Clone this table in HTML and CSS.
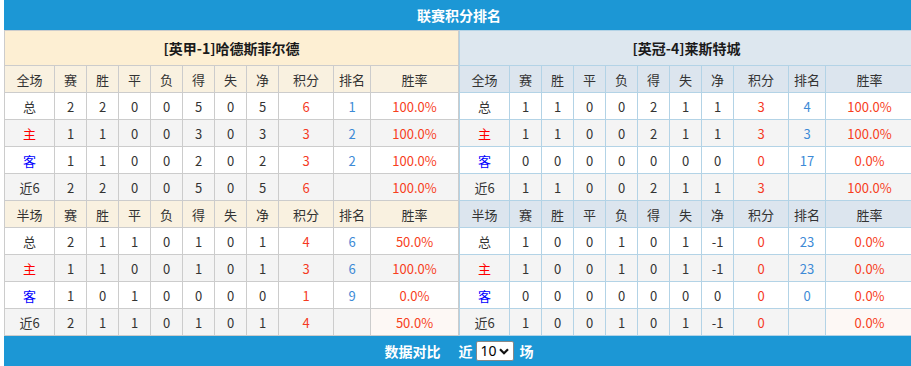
FILE: index.html
```html
<!DOCTYPE html>
<html lang="zh">
<head>
<meta charset="utf-8">
<title>联赛积分排名</title>
<link rel="stylesheet" href="styles.css">
</head>
<body>
<div class="wrap">
  <div class="bar title">联赛积分排名</div>
  <div class="tables">
    <table class="tb home">
      <colgroup><col class="c1"><col class="cn"><col class="cn"><col class="cn"><col class="cn"><col class="cn"><col class="cn"><col class="cn"><col class="cp"><col class="cr"><col class="cw"></colgroup>
      <tr class="team"><td colspan="11">[英甲-1]哈德斯菲尔德</td></tr>
      <tr class="head"><td>全场</td><td>赛</td><td>胜</td><td>平</td><td>负</td><td>得</td><td>失</td><td>净</td><td>积分</td><td>排名</td><td>胜率</td></tr>
      <tr class="w"><td>总</td><td>2</td><td>2</td><td>0</td><td>0</td><td>5</td><td>0</td><td>5</td><td class="pt">6</td><td class="rk">1</td><td class="rt">100.0%</td></tr>
      <tr class="g"><td class="zhu">主</td><td>1</td><td>1</td><td>0</td><td>0</td><td>3</td><td>0</td><td>3</td><td class="pt">3</td><td class="rk">2</td><td class="rt">100.0%</td></tr>
      <tr class="w"><td class="ke">客</td><td>1</td><td>1</td><td>0</td><td>0</td><td>2</td><td>0</td><td>2</td><td class="pt">3</td><td class="rk">2</td><td class="rt">100.0%</td></tr>
      <tr class="g"><td>近6</td><td>2</td><td>2</td><td>0</td><td>0</td><td>5</td><td>0</td><td>5</td><td class="pt">6</td><td class="rk"></td><td class="rt">100.0%</td></tr>
      <tr class="head"><td>半场</td><td>赛</td><td>胜</td><td>平</td><td>负</td><td>得</td><td>失</td><td>净</td><td>积分</td><td>排名</td><td>胜率</td></tr>
      <tr class="w"><td>总</td><td>2</td><td>1</td><td>1</td><td>0</td><td>1</td><td>0</td><td>1</td><td class="pt">4</td><td class="rk">6</td><td class="rt">50.0%</td></tr>
      <tr class="g"><td class="zhu">主</td><td>1</td><td>1</td><td>0</td><td>0</td><td>1</td><td>0</td><td>1</td><td class="pt">3</td><td class="rk">6</td><td class="rt">100.0%</td></tr>
      <tr class="w"><td class="ke">客</td><td>1</td><td>0</td><td>1</td><td>0</td><td>0</td><td>0</td><td>0</td><td class="pt">1</td><td class="rk">9</td><td class="rt">0.0%</td></tr>
      <tr class="g"><td>近6</td><td>2</td><td>1</td><td>1</td><td>0</td><td>1</td><td>0</td><td>1</td><td class="pt">4</td><td class="rk"></td><td class="rt soft">50.0%</td></tr>
    </table>
    <table class="tb away">
      <colgroup><col class="c1"><col class="cn"><col class="cn"><col class="cn"><col class="cn"><col class="cn"><col class="cn"><col class="cn"><col class="cp"><col class="cr"><col class="cw"></colgroup>
      <tr class="team"><td colspan="11">[英冠-4]莱斯特城</td></tr>
      <tr class="head"><td>全场</td><td>赛</td><td>胜</td><td>平</td><td>负</td><td>得</td><td>失</td><td>净</td><td>积分</td><td>排名</td><td>胜率</td></tr>
      <tr class="w"><td>总</td><td>1</td><td>1</td><td>0</td><td>0</td><td>2</td><td>1</td><td>1</td><td class="pt">3</td><td class="rk">4</td><td class="rt">100.0%</td></tr>
      <tr class="g"><td class="zhu">主</td><td>1</td><td>1</td><td>0</td><td>0</td><td>2</td><td>1</td><td>1</td><td class="pt">3</td><td class="rk">3</td><td class="rt">100.0%</td></tr>
      <tr class="w"><td class="ke">客</td><td>0</td><td>0</td><td>0</td><td>0</td><td>0</td><td>0</td><td>0</td><td class="pt">0</td><td class="rk">17</td><td class="rt">0.0%</td></tr>
      <tr class="g"><td>近6</td><td>1</td><td>1</td><td>0</td><td>0</td><td>2</td><td>1</td><td>1</td><td class="pt">3</td><td class="rk"></td><td class="rt">100.0%</td></tr>
      <tr class="head"><td>半场</td><td>赛</td><td>胜</td><td>平</td><td>负</td><td>得</td><td>失</td><td>净</td><td>积分</td><td>排名</td><td>胜率</td></tr>
      <tr class="w"><td>总</td><td>1</td><td>0</td><td>0</td><td>1</td><td>0</td><td>1</td><td>-1</td><td class="pt">0</td><td class="rk">23</td><td class="rt">0.0%</td></tr>
      <tr class="g"><td class="zhu">主</td><td>1</td><td>0</td><td>0</td><td>1</td><td>0</td><td>1</td><td>-1</td><td class="pt">0</td><td class="rk">23</td><td class="rt">0.0%</td></tr>
      <tr class="w"><td class="ke">客</td><td>0</td><td>0</td><td>0</td><td>0</td><td>0</td><td>0</td><td>0</td><td class="pt">0</td><td class="rk">0</td><td class="rt">0.0%</td></tr>
      <tr class="g"><td>近6</td><td>1</td><td>0</td><td>0</td><td>1</td><td>0</td><td>1</td><td>-1</td><td class="pt">0</td><td class="rk"></td><td class="rt soft">0.0%</td></tr>
    </table>
  </div>
  <div class="bar foot">
    <span class="foot-label">数据对比</span>
    <span class="foot-near">近</span>
    <span class="sel-wrap">
      <select class="sel"><option>10</option><option>20</option></select>
      <svg class="chev" width="10" height="7" viewBox="0 0 10 7"><path d="M1 1.2 L5 5.2 L9 1.2" fill="none" stroke="#111" stroke-width="2.2"/></svg>
    </span>
    <span class="foot-end">场</span>
  </div>
</div>
</body>
</html>
```
FILE: styles.css
```css
html, body {
  margin: 0;
  padding: 0;
  overflow: hidden;
  background: #fff;
}
body {
  font-family: "Microsoft YaHei", "Noto Sans CJK SC", "Noto Sans", sans-serif;
  font-size: 13px;
  color: #333;
}
.wrap {
  margin-left: 4px;
  width: 910px;
}
.bar {
  background: #1c97d5;
  color: #fff;
  font-weight: bold;
  font-size: 14px;
  height: 30px;
  line-height: 30px;
}
.title {
  text-align: center;
}
.tables {
  display: flex;
}
.tb {
  border-collapse: separate;
  border-spacing: 0;
  table-layout: fixed;
  width: 455px;
  border-top: 1px solid #ccc;
  border-left: 1px solid #ccc;
}
.tb td {
  border-right: 1px solid #ccc;
  border-bottom: 1px solid #ccc;
  text-align: center;
  height: 26px;
  padding: 0;
  white-space: nowrap;
}
.away, .away td {
  border-color: #b3d3e6;
}
.c1 { width: 50px; }
.cn { width: 32px; }
.cp { width: 55px; }
.cr { width: 37px; }
.cw { width: 88px; }
.tb tr.team td {
  height: 34px;
  font-size: 14px;
  font-weight: bold;
  color: #1a1a1a;
}
.home .team td { background: #fdefd3; }
.home .head td { background: #f9f1e0; }
.away .team td { background: #dde7ef; }
.away .head td { background: #dce5ee; }
.w td { background: #fff; }
.g td { background: #f4f4f4; }
.zhu { color: #f00; }
.ke { color: #00f; }
.tb .pt { color: #f53a1f; }
.tb .rk { color: #3d8ad6; }
.tb .rt { color: #f7401c; }
.g td.soft { background: #fdf8f5; }
.foot {
  display: flex;
  justify-content: center;
  align-items: center;
  height: 30px;
}
.foot-label { margin-right: 18px; }
.foot-near { margin-right: 3px; }
.sel-wrap {
  position: relative;
  display: inline-block;
  height: 20px;
  margin-right: 6px;
}
.sel {
  -webkit-appearance: none;
  appearance: none;
  width: 38px;
  height: 20px;
  border: 1px solid #888;
  border-radius: 2px;
  background: #fff;
  color: #000;
  font-family: "Noto Sans", sans-serif;
  font-size: 14px;
  padding: 0 0 0 4px;
  margin: 0;
  line-height: 18px;
  display: block;
}
.chev {
  position: absolute;
  right: 5px;
  top: 7px;
  pointer-events: none;
}
```
